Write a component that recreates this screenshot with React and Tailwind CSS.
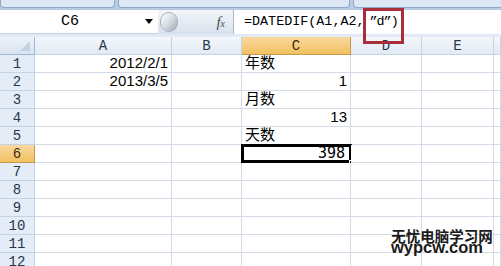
import React from "react";

const cols = ["A", "B", "C", "D", "E", ""];
const colWidths = "grid-cols-[35px_137px_70px_109px_71px_72px_1fr]";

const cells = {
  "1A": { v: "2012/2/1", align: "right" },
  "2A": { v: "2013/3/5", align: "right" },
  "1C": { v: "年数", align: "left", cjk: true },
  "2C": { v: "1", align: "right" },
  "3C": { v: "月数", align: "left", cjk: true },
  "4C": { v: "13", align: "right" },
  "5C": { v: "天数", align: "left", cjk: true },
  "6C": { v: "398", align: "right", mono: true },
};

function Cell({ row, col }) {
  const data = cells[`${row}${col}`];
  const selected = row === 6 && col === "C";
  return (
    <div className="relative h-[18px] border-r border-b border-[#d4dbe6] bg-white">
      {data && (
        <div
          className={
            "absolute inset-x-0 bottom-0 h-[18px] leading-[18px] px-[3px] text-[15px] text-black " +
            (data.align === "right" ? "text-right " : "text-left ") +
            (data.cjk
              ? "font-['Noto_Sans_CJK_SC',sans-serif] -translate-y-[1px]"
              : data.mono
              ? "font-['DejaVu_Sans_Mono',monospace] text-[13px] pr-[5px]"
              : "font-['Liberation_Sans',Arial,sans-serif]")
          }
        >
          {data.v}
        </div>
      )}
      {selected && (
        <>
          <div className="absolute -left-[1px] -top-[1px] -right-[2px] -bottom-[1px] border-[3px] border-black" />
          <div className="absolute -right-[4px] -bottom-[3px] w-[5px] h-[5px] bg-black border border-white" />
        </>
      )}
    </div>
  );
}

export default function App() {
  const rows = [1, 2, 3, 4, 5, 6, 7, 8, 9, 10, 11, 12];
  return (
    <div className="relative w-[501px] h-[266px] overflow-hidden bg-white select-none">
      {/* ribbon bottom edge */}
      <div className="flex h-[9px] bg-[#b9cde6] gap-[3px]">
        <div className="w-[115px] h-[8px] bg-[#dde8f5] border-x border-b border-[#8ea7c8] rounded-b-[4px]" />
        <div className="w-[232px] h-[8px] bg-[#dde8f5] border-x border-b border-[#8ea7c8] rounded-b-[4px]" />
        <div className="flex-1 h-[8px] bg-[#dde8f5] border-l border-b border-[#8ea7c8] rounded-bl-[4px]" />
      </div>

      {/* formula bar */}
      <div className="flex h-[26px] bg-[#dfe8f4] border-t border-[#b7c8de]">
        <div className="flex w-[158px] h-[24px] bg-white border-b border-[#c6d3e4]">
          <div className="w-[140px] text-center leading-[24px] text-[15px] text-black font-['Liberation_Mono',monospace]">
            C6
          </div>
          <div className="flex-1 flex items-center justify-center">
            <div className="w-0 h-0 border-l-[4px] border-r-[4px] border-t-[5px] border-l-transparent border-r-transparent border-t-black" />
          </div>
        </div>
        <div className="relative flex w-[75px] h-[24px] items-center bg-gradient-to-b from-[#f3f6fa] to-[#d7e1ee]">
          <div className="absolute left-[2px] top-[2px] w-[18px] h-[20px] rounded-full bg-gradient-to-br from-white via-[#d8dde3] to-[#9aa6b4] border border-[#a9b4c2]" />
          <div className="ml-auto mr-[8px] italic text-[15px] font-['Liberation_Serif',serif] text-[#4a4a4a]">
            f<span className="text-[10px]">x</span>
          </div>
        </div>
        <div className="flex-1 h-[24px] bg-white border-l border-[#a9b8cb] pl-[10px] leading-[24px] text-[13.4px] text-black font-['Liberation_Mono',monospace] whitespace-nowrap">
          =DATEDIF(A1,A2,<span className="ml-[5px] tracking-[-1px]">”d”)</span>
        </div>
      </div>
      <div className="h-[2px] bg-[#e3eaf3]" />

      {/* sheet */}
      <div className={"grid " + colWidths}>
        <div className="relative h-[18px] bg-gradient-to-b from-[#eef3fa] to-[#d9e4f1] border-r border-b border-[#9eb6ce]">
          <div className="absolute right-[4px] bottom-[3px] w-0 h-0 border-l-[10px] border-l-transparent border-b-[10px] border-b-[#c4d2e4]" />
        </div>
        {cols.map((c, i) => (
          <div
            key={i}
            className={
              "h-[18px] leading-[18px] text-center text-[14px] font-['Liberation_Mono',monospace] border-r border-b " +
              (c === "C"
                ? "bg-gradient-to-b from-[#f9d99f] to-[#f1c15f] border-[#c29b4c] text-[#3b2a10]"
                : "bg-gradient-to-b from-[#f4f7fc] to-[#e2eaf5] border-[#c5d3e3] text-[#27374a]")
            }
          >
            {c}
          </div>
        ))}
        {rows.map((r) => (
          <React.Fragment key={r}>
            <div
              className={
                "h-[18px] leading-[18px] text-center text-[14px] font-['Liberation_Mono',monospace] border-r border-b " +
                (r === 6
                  ? "bg-gradient-to-b from-[#f9d99f] to-[#f1c15f] border-[#c29b4c] text-[#3b2a10]"
                  : "bg-[#e4ecf7] border-[#c5d3e3] text-[#27374a]")
              }
            >
              {r}
            </div>
            {cols.map((c, i) => (
              <Cell key={i} row={r} col={c} />
            ))}
          </React.Fragment>
        ))}
      </div>

      {/* highlight box around "d" */}
      <div className="absolute left-[363px] top-[8px] w-[41px] h-[36px] border-[3px] border-[#a62f3b]" />

      {/* watermark */}
      <div className="absolute left-[389px] top-[229px] w-[106px] h-[14px] leading-[14px] text-center font-bold text-[14.5px] text-[#1a1a1a] font-['Noto_Sans_CJK_SC',sans-serif] whitespace-nowrap">
        无忧电脑学习网
      </div>
      <div className="absolute left-[389px] top-[243px] w-[96px] h-[12px] leading-[8px] text-center font-bold text-[16.5px] text-[#1a1a1a] font-['Liberation_Sans',Arial,sans-serif]">
        wypcw.com
      </div>
    </div>
  );
}
